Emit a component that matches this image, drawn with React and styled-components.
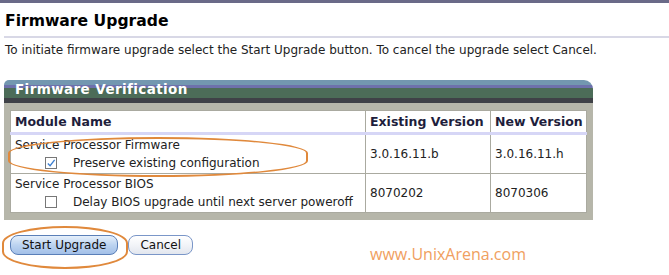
import React from 'react';
import styled, { createGlobalStyle } from 'styled-components';

const GlobalStyle = createGlobalStyle`
  body {
    margin: 0;
    background: #fff;
    font-family: "DejaVu Sans", Verdana, sans-serif;
  }
`;

const rows = [
  { name: 'Service Processor Firmware', option: 'Preserve existing configuration', checked: true, existing: '3.0.16.11.b', next: '3.0.16.11.h' },
  { name: 'Service Processor BIOS', option: 'Delay BIOS upgrade until next server poweroff', checked: false, existing: '8070202', next: '8070306' },
];

const App = () => {
  return (
    <Page>
      <GlobalStyle />
      <TopStrip />
      <Title>Firmware Upgrade</Title>
      <Rule />
      <Desc>To initiate firmware upgrade select the Start Upgrade button. To cancel the upgrade select Cancel.</Desc>

      <Panel>
        <PanelHead>Firmware Verification</PanelHead>
        <Frame>
          <Table>
            <colgroup>
              <col style={{ width: 355 }} />
              <col style={{ width: 125 }} />
              <col />
            </colgroup>
            <thead>
              <tr>
                <Th>Module Name</Th>
                <Th>Existing Version</Th>
                <Th>New Version</Th>
              </tr>
            </thead>
            <tbody>
              {rows.map((r) => (
                <tr key={r.name}>
                  <Td>
                    <div>{r.name}</div>
                    <Option>
                      <Check>
                        {r.checked && (
                          <svg width="11" height="11" viewBox="0 0 11 11">
                            <path d="M2 5.5 L4.5 8 L9.5 1.5" fill="none" stroke="#3d7fd0" strokeWidth="1.5" />
                          </svg>
                        )}
                      </Check>
                      {r.option}
                    </Option>
                  </Td>
                  <Td>{r.existing}</Td>
                  <Td>{r.next}</Td>
                </tr>
              ))}
            </tbody>
          </Table>
        </Frame>
        <Ring $x={4} $y={57} $w={296} $h={36} />
      </Panel>

      <Buttons>
        <Button $primary>Start Upgrade</Button>
        <Button>Cancel</Button>
        <Ring $x={-8} $y={-9} $w={122} $h={39} />
        <Watermark>www.UnixArena.com</Watermark>
      </Buttons>
    </Page>
  );
};

export default App;

const Page = styled.div`
  width: 669px;
  height: 275px;
  overflow: hidden;
`;

const TopStrip = styled.div`
  height: 3px;
  background: #6a6a88;
`;

const Title = styled.h1`
  margin: 9px 0 0 5px;
  font-size: 15.6px;
  font-weight: bold;
  line-height: 19px;
  color: #000;
`;

const Rule = styled.div`
  height: 2px;
  margin: 5px 0 0 4px;
  background: #d8d8e6;
`;

const Desc = styled.p`
  margin: 4px 0 0 5px;
  font-size: 12px;
  line-height: 16px;
  color: #222;
`;

const Panel = styled.div`
  position: relative;
  width: 589px;
  margin: 22px 0 0 4px;
`;

const PanelHead = styled.div`
  height: 23px;
  padding-left: 11px;
  border-radius: 5px 9px 0 0;
  background: linear-gradient(
    #7397b0 0, #7397b0 5px,
    #6e71ac 5px, #6e71ac 8px,
    #4c6c58 8px, #4c6c58 18px,
    #3f4147 18px, #3f4147 23px
  );
  color: #fff;
  font-size: 13.5px;
  font-weight: bold;
  line-height: 19px;
  letter-spacing: 0.4px;
`;

const Frame = styled.div`
  background: #b6b6aa;
  padding: 7px 6px 7px 6px;
`;

const Table = styled.table`
  width: 100%;
  table-layout: fixed;
  border-collapse: collapse;
  background: #fff;
  font-size: 12px;
  color: #222;
`;

const Th = styled.th`
  height: 21px;
  padding: 0 4px;
  text-align: left;
  font-size: 12.5px;
  font-weight: bold;
  color: #1e1e3c;
  border: 1px solid #aaaaa0;
  border-bottom: 3px solid #d6d6f6;
  white-space: nowrap;
`;

const Td = styled.td`
  height: 38px;
  padding: 0 4px;
  vertical-align: middle;
  border: 1px solid #aaaaa0;
  line-height: 18px;
  white-space: nowrap;
`;

const Option = styled.div`
  display: flex;
  align-items: center;
  padding-left: 30px;
`;

const Check = styled.span`
  display: inline-flex;
  align-items: center;
  justify-content: center;
  width: 10px;
  height: 10px;
  margin-right: 16px;
  border: 1px solid #777;
  background: #fff;
`;

const Ring = styled.div`
  position: absolute;
  left: ${(p) => p.$x}px;
  top: ${(p) => p.$y}px;
  width: ${(p) => p.$w}px;
  height: ${(p) => p.$h}px;
  border: 2px solid #e0893c;
  border-radius: 50% / 40%;
  pointer-events: none;
`;

const Buttons = styled.div`
  position: relative;
  display: flex;
  gap: 10px;
  margin: 15px 0 0 10px;
`;

const Button = styled.button`
  height: 20px;
  padding: 0 11px;
  border-radius: 8px;
  border: 1px solid ${(p) => (p.$primary ? '#5a7fb8' : '#7a96c8')};
  background: ${(p) =>
    p.$primary
      ? 'linear-gradient(#e6f0fb, #bcd3f0 50%, #a3c0e8)'
      : 'linear-gradient(#ffffff, #f2f4f8 50%, #e2e6ee)'};
  font-family: "DejaVu Sans", Verdana, sans-serif;
  font-size: 12px;
  color: #111;
  line-height: 18px;
`;

const Watermark = styled.div`
  position: absolute;
  left: 360px;
  top: 8px;
  font-family: "Open Sans", "DejaVu Sans", sans-serif;
  font-size: 16px;
  color: #f0a060;
`;
